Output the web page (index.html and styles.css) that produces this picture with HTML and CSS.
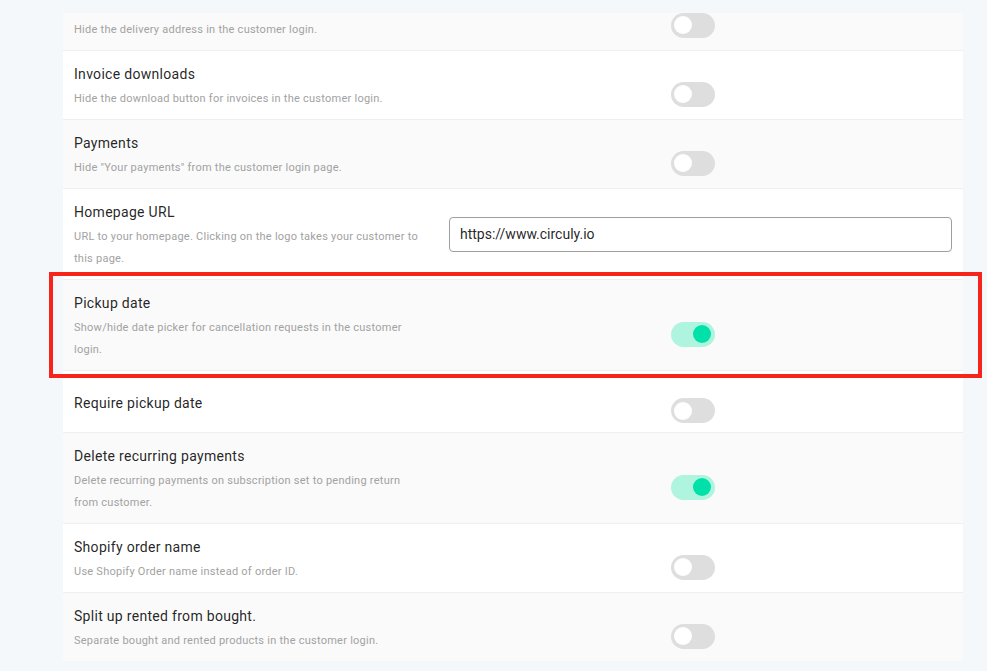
FILE: index.html
```html
<!DOCTYPE html>
<html lang="en">
<head>
<meta charset="utf-8">
<title>Customer login settings</title>
<link rel="stylesheet" href="styles.css">
</head>
<body>
<div class="page">
  <div class="viewport">
    <div class="card">
      <div class="row">
        <div class="label-col">
          <div class="title">Delivery address</div>
          <div class="desc">Hide the delivery address in the customer login.</div>
        </div>
        <div class="control-col"><div class="switch-wrap"><span class="switch"><span class="knob"></span></span></div></div>
      </div>
      <div class="row">
        <div class="label-col">
          <div class="title">Invoice downloads</div>
          <div class="desc">Hide the download button for invoices in the customer login.</div>
        </div>
        <div class="control-col"><div class="switch-wrap"><span class="switch"><span class="knob"></span></span></div></div>
      </div>
      <div class="row">
        <div class="label-col">
          <div class="title">Payments</div>
          <div class="desc">Hide "Your payments" from the customer login page.</div>
        </div>
        <div class="control-col"><div class="switch-wrap"><span class="switch"><span class="knob"></span></span></div></div>
      </div>
      <div class="row">
        <div class="label-col">
          <div class="title">Homepage URL</div>
          <div class="desc">URL to your homepage. Clicking on the logo takes your customer to this page.</div>
        </div>
        <div class="control-col"><div class="input">https://www.circuly.io</div></div>
      </div>
      <div class="row">
        <div class="label-col">
          <div class="title">Pickup date</div>
          <div class="desc">Show/hide date picker for cancellation requests in the customer login.</div>
        </div>
        <div class="control-col"><div class="switch-wrap"><span class="switch on"><span class="knob"></span></span></div></div>
      </div>
      <div class="row">
        <div class="label-col">
          <div class="title">Require pickup date</div>
        </div>
        <div class="control-col"><div class="switch-wrap"><span class="switch"><span class="knob"></span></span></div></div>
      </div>
      <div class="row">
        <div class="label-col">
          <div class="title">Delete recurring payments</div>
          <div class="desc">Delete recurring payments on subscription set to pending return from customer.</div>
        </div>
        <div class="control-col"><div class="switch-wrap"><span class="switch on"><span class="knob"></span></span></div></div>
      </div>
      <div class="row">
        <div class="label-col">
          <div class="title">Shopify order name</div>
          <div class="desc">Use Shopify Order name instead of order ID.</div>
        </div>
        <div class="control-col"><div class="switch-wrap"><span class="switch"><span class="knob"></span></span></div></div>
      </div>
      <div class="row">
        <div class="label-col">
          <div class="title">Split up rented from bought.</div>
          <div class="desc">Separate bought and rented products in the customer login.</div>
        </div>
        <div class="control-col"><div class="switch-wrap"><span class="switch"><span class="knob"></span></span></div></div>
      </div>
    </div>
  </div>
  <div class="highlight"></div>
</div>
</body>
</html>
```

FILE: styles.css
```css
* { box-sizing: border-box; }
html, body {
  margin: 0;
  padding: 0;
  background: #f5f8fb;
  font-family: Roboto, "Liberation Sans", Arial, sans-serif;
}
.page {
  position: relative;
  width: 987px;
  height: 671px;
  overflow: hidden;
}
.viewport {
  margin: 13px 24px 0 63px;
  height: 658px;
  overflow: hidden;
}
.card {
  margin-top: -31px;
  background: #fff;
  border-radius: 4px;
  overflow: hidden;
}
.row {
  display: flex;
  align-items: center;
  min-height: 62px;
  border-bottom: 1px solid #efefef;
}
.row:nth-child(odd) { background: #fafafa; }
.row:last-child { border-bottom: none; }
.label-col {
  flex: 0 0 375px;
  padding: 12px 12px 9px 11px;
}
.title {
  font-size: 14px;
  line-height: 22px;
  color: rgba(0, 0, 0, 0.87);
  letter-spacing: 0.3px;
}
.desc {
  margin-top: 3px;
  font-size: 11px;
  line-height: 22px;
  color: #a2a2a2;
  letter-spacing: 0.25px;
}
.control-col {
  flex: 1 1 auto;
  padding: 0 11px;
}
.switch-wrap {
  display: flex;
  justify-content: center;
  padding-top: 18px;
}
.switch {
  display: flex;
  align-items: center;
  width: 44px;
  height: 25px;
  margin-right: 16px;
  padding: 0 3px;
  border-radius: 13px;
  background: #dedede;
}
.knob {
  width: 18px;
  height: 18px;
  border-radius: 50%;
  background: #fff;
}
.switch.on {
  justify-content: flex-end;
  padding: 0 4px;
  background: #aef4df;
}
.switch.on .knob { background: #00e1a9; }
.input {
  height: 35px;
  padding: 0 10px;
  display: flex;
  align-items: center;
  border: 1px solid #9e9e9e;
  border-radius: 4px;
  background: #fff;
  font-size: 14px;
  color: rgba(0, 0, 0, 0.87);
}
.highlight {
  position: absolute;
  left: 49px;
  top: 272px;
  width: 933px;
  height: 106px;
  border: 4px solid #f6241a;
}
```
